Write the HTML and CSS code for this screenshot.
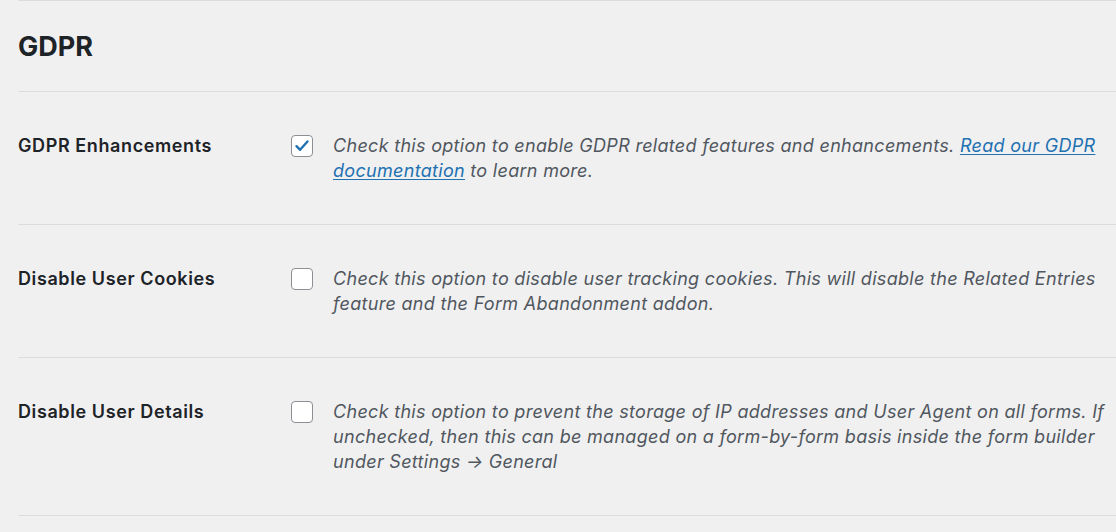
FILE: index.html
```html
<!DOCTYPE html>
<html lang="en">
<head>
<meta charset="utf-8">
<title>GDPR Settings</title>
<link rel="stylesheet" href="styles.css">
</head>
<body>
<div class="settings">
  <div class="section-head">
    <h2 class="section-title">GDPR</h2>
  </div>

  <div class="row">
    <div class="row-label">GDPR Enhancements</div>
    <div class="row-field">
      <span class="checkbox checked">
        <svg viewBox="0 0 20 20" width="20" height="20" aria-hidden="true"><path d="M4.5 10.2l3.6 3.6 7.4-8.3" fill="none" stroke="#2271b1" stroke-width="2.4" stroke-linecap="round" stroke-linejoin="round"/></svg>
      </span>
      <p class="desc">Check this option to enable GDPR related features and enhancements. <a href="#">Read our GDPR documentation</a> to learn more.</p>
    </div>
  </div>

  <div class="row">
    <div class="row-label">Disable User Cookies</div>
    <div class="row-field">
      <span class="checkbox"></span>
      <p class="desc">Check this option to disable user tracking cookies. This will disable the Related Entries feature and the Form Abandonment addon.</p>
    </div>
  </div>

  <div class="row">
    <div class="row-label">Disable User Details</div>
    <div class="row-field">
      <span class="checkbox"></span>
      <p class="desc">Check this option to prevent the storage of IP addresses and User Agent on all forms. If unchecked, then this can be managed on a form-by-form basis inside the form builder under Settings → General</p>
    </div>
  </div>
</div>
</body>
</html>
```

FILE: styles.css
```css
html, body {
  margin: 0;
  padding: 0;
  background: #f0f0f1;
}

body {
  font-family: Inter, "Noto Sans", sans-serif;
  color: #1d2327;
  overflow: hidden;
}

.settings {
  padding-left: 18px;
}

.section-head {
  border-top: 1px solid #dcdcde;
  border-bottom: 1px solid #dcdcde;
  height: 90px;
  display: flex;
  align-items: center;
}

.section-title {
  margin: 0;
  font-size: 27px;
  font-weight: 700;
  line-height: 1;
  color: #1d2327;
}

.row {
  display: flex;
  align-items: flex-start;
  padding: 41px 0 41px 0;
  border-bottom: 1px solid #dcdcde;
}

.row-label {
  width: 273px;
  flex: none;
  font-size: 18px;
  font-weight: 600;
  line-height: 25px;
  letter-spacing: 0.6px;
  color: #1d2327;
}

.row-field {
  display: flex;
  align-items: flex-start;
  gap: 20px;
  flex: 1;
  padding-right: 10px;
}

.checkbox {
  flex: none;
  width: 20px;
  height: 20px;
  margin-top: 2px;
  border: 1px solid #8c8f94;
  border-radius: 4px;
  background: #ffffff;
  display: flex;
  align-items: center;
  justify-content: center;
}

.checkbox svg {
  display: block;
}

.desc {
  margin: 0;
  font-size: 18px;
  line-height: 25px;
  font-style: italic;
  letter-spacing: 0.3px;
  color: #50575e;
}

.desc a {
  color: #2271b1;
  text-decoration: underline;
  text-underline-offset: 2px;
}
```
